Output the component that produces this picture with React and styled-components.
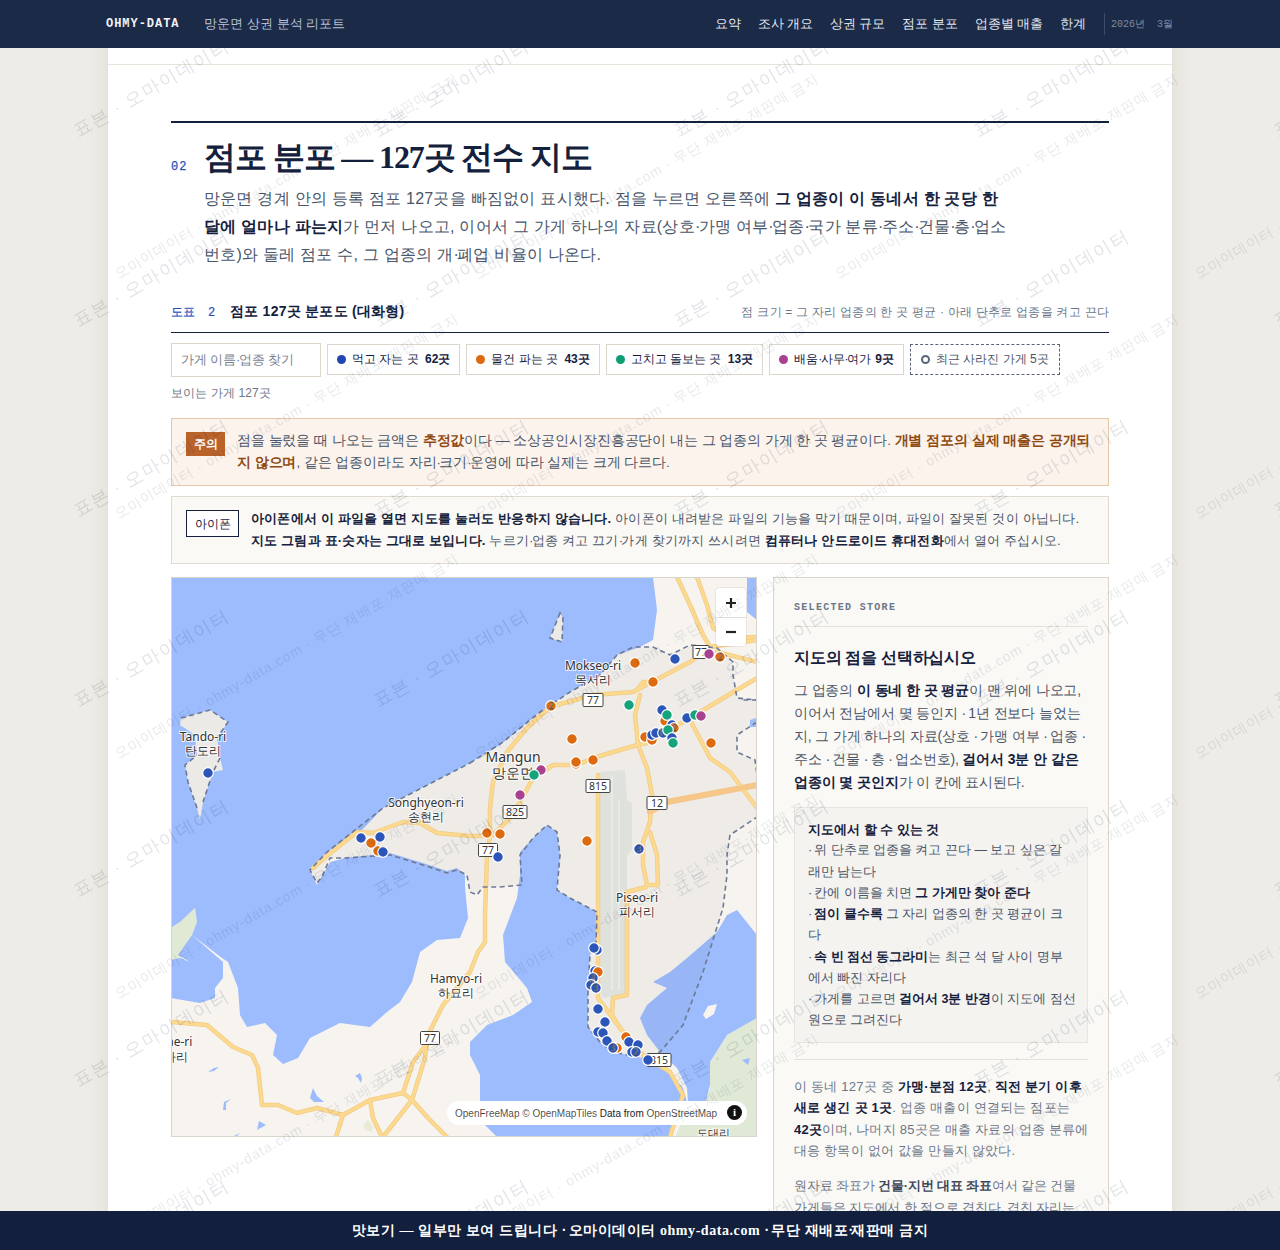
import React from "react";
import styled, { createGlobalStyle } from "styled-components";

const SANS = `"Liberation Sans", sans-serif`;
const SERIF = `"Liberation Serif", serif`;
const MONO = `"Liberation Mono", monospace`;
const NAVY = "#1b2a47";
const INK = "#14213d";
const BLUE = "#2a52be";

const Global = createGlobalStyle`
  html, body { margin: 0; padding: 0; height: 1250px; overflow: hidden; background: #eeece6; }
  body { font-family: ${SANS}; color: #4a5568; }
  * { box-sizing: border-box; }
`;

const Mid = styled.span`letter-spacing: -1.6px;`;
const M = () => <Mid>·</Mid>;

const TopBar = styled.header`
  position: fixed; top: 0; left: 0; right: 0; height: 48px; z-index: 100;
  background: ${NAVY}; display: flex; align-items: center; padding: 0 107px 0 106px;
`;
const Brand = styled.span`
  font: 700 12px ${MONO}; letter-spacing: .08em; color: #f1f3f7; margin-right: 25px;
`;
const TopTitle = styled.span`font-size: 13px; color: #b9c2d4;`;
const Nav = styled.nav`margin-left: auto; display: flex; gap: 16.8px; align-items: center; font-size: 12.8px; color: #e3e7ef;`;
const NavDate = styled.span`
  padding-left: 6px; margin-left: 1.2px; border-left: 1px solid #3c4b69; height: 22px; display: flex; align-items: center;
  font: 10px ${MONO}; color: #7f8aa3; white-space: pre;
`;
const BottomBar = styled.footer`
  position: fixed; left: 0; right: 0; bottom: 0; height: 39px; z-index: 100;
  background: #13203d; color: #fff; display: flex; align-items: center; justify-content: center;
  font: 700 14px ${SERIF}; letter-spacing: .04em;
`;

const Sheet = styled.main`
  width: 1066px; margin: 0 auto; background: #fff; padding-top: 48px; height: 1250px; overflow: hidden;
  box-shadow: 0 0 24px rgba(60,50,30,.07); border-left: 1px solid #e4e1d9; border-right: 1px solid #e4e1d9;
`;
const PrevEnd = styled.div`height: 17px; border-bottom: 1px solid #e8e4db;`;
const Section = styled.section`padding: 56px 63px 0 63px;`;
const SectionHead = styled.div`border-top: 2px solid ${INK}; padding-top: 13px; display: flex; align-items: flex-end;`;
const SectionNo = styled.span`font: 400 12px/14px ${MONO}; color: ${BLUE}; letter-spacing: .08em; width: 33px; margin-bottom: 4px; -webkit-text-stroke: .25px ${BLUE};`;
const Title = styled.h2`margin: 0; font: 700 32px/42px ${SERIF}; color: ${INK}; letter-spacing: -.035em;`;
const Lede = styled.p`
  margin: 7px 0 0 33px; max-width: 806px; font-size: 16px; line-height: 28px; color: #4a5568; letter-spacing: .015em;
  strong { color: ${INK}; font-weight: 700; }
`;
const FigHead = styled.div`
  margin-top: 34px; padding-bottom: 11px; border-bottom: 1px solid ${INK}; display: flex; align-items: center; letter-spacing: .015em;
`;
const FigNo = styled.span`font: 400 12px ${MONO}; color: ${BLUE}; width: 59px; word-spacing: 5px; -webkit-text-stroke: .2px ${BLUE};`;
const FigTitle = styled.span`font-size: 14px; font-weight: 700; color: ${INK};`;
const FigNote = styled.span`margin-left: auto; font-size: 12px; color: #6c7689;`;
const Controls = styled.div`margin-top: 10px; display: flex; gap: 6px; align-items: flex-start;`;
const Search = styled.div`
  width: 150px; height: 34px; border: 1px solid #dcd6cc; background: #fff; padding: 0 9px; display: flex; align-items: center;
  font-size: 13px; color: #7a8292; white-space: pre; letter-spacing: -.01em;
`;
const Chip = styled.div`
  height: 31px; margin-top: 1px; padding: 0 ${p => (p.$dashed ? 10 : 9)}px; display: flex; align-items: center; gap: 6px; font-size: 12px; background: #fff; white-space: pre;
  border: 1px ${p => (p.$dashed ? `dashed #5a6478` : `solid #dcd6cc`)};
  color: ${p => (p.$dashed ? "#4a5568" : INK)};
  b { font-weight: 700; margin-left: ${p => p.$bm ?? 3}px; }
`;
const ChipLabel = styled.span``;
const ChipDot = styled.i`
  width: 9px; height: 9px; border-radius: 50%;
  background: ${p => p.$c};
`;
const RingDot = styled.i`width: 9px; height: 9px; border-radius: 50%; border: 2px solid #5a6478;`;
const Count = styled.div`margin-top: 7px; font-size: 12px; line-height: 18px; color: #6c7689; letter-spacing: .01em;`;
const Note = styled.div`
  margin-top: ${p => p.$top}px; display: flex; gap: 12px; padding: 11px 14px 11px;
  background: ${p => (p.$warn ? "#fbf3ec" : "#faf9f5")};
  border: 1px solid ${p => (p.$warn ? "#e6c9aa" : "#e0dacf")};
  font-size: ${p => (p.$warn ? 13.5 : 13)}px; line-height: 22px; color: #4a5568; letter-spacing: ${p => (p.$warn ? "-.005em" : ".015em")};
`;
const WarnTag = styled.span`
  flex: none; height: 24px; width: 39px; margin-top: 2px; background: #b9622a; color: #fff; font-size: 12px; font-weight: 700; letter-spacing: 0;
  display: flex; align-items: center; justify-content: center;
`;
const PhoneTag = styled.span`
  flex: none; height: 27px; width: 53px; margin-top: 2px; background: #fff; color: ${INK}; border: 1px solid ${INK}; font-size: 12px; letter-spacing: 0;
  display: flex; align-items: center; justify-content: center;
`;
const NoteText = styled.div`
  strong { font-weight: 700; color: ${p => (p.$warn ? "#8f4a12" : INK)}; }
`;
const Columns = styled.div`margin-top: 13px; display: grid; grid-template-columns: 586px 336px; gap: 16px; align-items: start;`;
const MapBox = styled.div`position: relative; height: 560px; border: 1px solid #d9d5cc; overflow: hidden; background: #9cbcfd;`;
const MapSvg = styled.svg`display: block; width: 586px; height: 560px; margin: -1px;`;
const ZoomCtl = styled.div`
  position: absolute; top: 10px; right: 10px; width: 30px; height: 58px; background: #fff; border-radius: 4px;
  box-shadow: 0 0 0 1px rgba(0,0,0,.06); display: grid; grid-template-rows: 1fr 1fr;
  div + div { border-top: 1px solid #ddd; }
  div { display: flex; align-items: center; justify-content: center; }
`;
const Attrib = styled.div`
  position: absolute; right: 9px; bottom: 11px; height: 24px; width: 300px; border-radius: 12px; background: #fff;
  display: flex; align-items: center; padding-left: 8px; font: 10px "Liberation Sans", sans-serif; color: #222; white-space: nowrap;
  em { font-style: normal; color: rgba(0,0,0,.72); }
`;
const InfoBtn = styled.span`
  position: absolute; right: 5px; top: 4px; width: 15px; height: 15px; border-radius: 50%; background: #111; color: #fff;
  font: 700 11px/15px "Liberation Serif", serif; text-align: center;
`;
const Side = styled.aside`background: #faf9f5; border: 1px solid #ddd6ca; padding: 21px 20px 0; height: 700px;`;
const SideKicker = styled.div`
  font: 700 10px/18px ${MONO}; letter-spacing: .13em; color: #6c7689; padding-bottom: 9px; border-bottom: 1px solid #e6e2da;
`;
const SideHead = styled.h3`margin: 19px 0 0; font-size: 16px; line-height: 24px; font-weight: 700; color: ${INK}; letter-spacing: -.015em;`;
const SideBody = styled.p`
  margin: 9px 0 0; font-size: 14px; line-height: 23px; color: #4a5568; letter-spacing: -.01em;
  strong { font-weight: 700; color: ${INK}; }
`;
const SideFine = styled.p`
  margin: ${p => p.$top}px 0 0; font-size: ${p => p.$fs}px; line-height: ${p => p.$lh}px; color: #6b7588; letter-spacing: ${p => p.$ls}; white-space: nowrap;
  strong { font-weight: 700; color: ${p => p.$strong}; }
`;
const HowTo = styled.div`
  margin-top: 13px; background: #f4f3f0; border: 1px solid #e8e5df; padding: 11px 13px 10px; font-size: 12.5px; line-height: 21.25px; color: #4a5568; white-space: nowrap;
  strong { font-weight: 700; color: ${INK}; }
`;
const HowTitle = styled.div`font-size: 13px; font-weight: 700; color: ${INK};`;
const HowRow = styled.div``;
const SideRule = styled.div`margin-top: 16px; border-top: 1px solid #e6e2da;`;

const Watermark = styled.div`
  position: fixed; inset: 0; z-index: 50; pointer-events: none; overflow: hidden; display: grid;
`;
const WmGrid = styled.div`
  grid-area: 1 / 1; display: grid;
  grid-template-columns: repeat(6, ${p => p.$w}px); grid-auto-rows: ${p => p.$h}px;
  margin-left: ${p => p.$x}px; margin-top: ${p => p.$y}px; width: max-content; height: max-content;
`;
const WmCell = styled.div`display: flex; align-items: center; justify-content: center; overflow: visible;`;
const WmText = styled.span`
  transform: rotate(-30deg); white-space: nowrap; font-size: ${p => p.$fs}px; letter-spacing: ${p => p.$ls}px;
  color: rgba(27,42,71,${p => p.$a});
`;

const C = { b: "#2b55b8", o: "#dd6a0f", g: "#14a37a", p: "#a8428e" };
const DOTS = [
  ["b",208,773],["b",361,838],["b",380,837],["o",371,843],["o",378,851],["b",383,852],
  ["o",635,663],["o",653,682],["b",675,659],["o",720,657,"2"],["p",709,654],
  ["o",551,706,"2"],["g",629,705],
  ["b",662,710],["o",665,721],["g",667,715],["b",672,725],["o",674,728,"2"],
  ["b",687,718],["g",695,715],["p",701,716],
  ["o",645,737],["o",652,740],["b",652,735],["b",656,733],["b",663,733,"16"],["g",668,730],["b",672,738],["g",673,743],
  ["o",711,743],["o",572,739],["o",576,764],["o",576,762],["o",593,760],
  ["p",541,770],["g",534,775],["p",520,795],
  ["o",487,833],["o",500,834],["b",498,857],["o",587,841],["b",639,849,"3"],
  ["b",597,950],["b",594,948],["b",595,971],["o",598,972],["b",593,978,"4"],["b",591,985,"2"],["b",596,988,"3"],
  ["b",598,1009],["b",605,1022],["b",598,1032],["b",603,1033],["b",607,1041],
  ["o",617,1048],["b",613,1048,"3"],["o",626,1037],["b",629,1042],["b",638,1045],["b",632,1052],["b",636,1052,"2"],["b",648,1060],
];
const SHIELDS = [
  ["77",593,700,20],["825",515,812,24],["815",598,786,24],["12",657,803,20],["77",488,850,19],["77",430,1038,19],["815",659,1060,24],["77",701,652,16],
];
const LABELS = [
  ["Tando-ri",203,741,12],["탄도리",203,755,12],["Mokseo-ri",593,670,12],["목서리",593,684,12],
  ["Mangun",513,762,14],["망운면",513,778,14],["Songhyeon-ri",426,807,12],["송현리",426,821,12],
  ["Piseo-ri",637,902,12],["피서리",637,916,12],["Hamyo-ri",456,983,12],["하묘리",456,997,12],
  ["Dodae-ri",168,1046,12],["다리",176,1061,12],["도대리",713,1137,11],
];
const MAJOR = [
  "M313 868L322 860L328 855L357 832L373 833L403 822L420 823L437 833L470 836L490 836",
  "M490 836L490 808L493 782L507 752L527 728L550 707L593 695L633 692L690 662L710 647L757 640",
  "M490 836L487 855L485 915L485 942L478 952L470 972L443 1005L428 1035L425 1058L412 1100L383 1137",
  "M412 1100L403 1093L370 1100L343 1115L317 1108L297 1113L278 1105L262 1105L258 1068L252 1055L233 1047L207 1025L172 1022",
  "M343 1115L336 1137", "M370 1100L373 1118L382 1137", "M412 1100L428 1118L447 1137", "M403 1093L413 1062L428 1042",
  "M493 835L513 815L533 778L553 765L577 765L593 758L637 745L647 743L690 718L757 678",
  "M640 695L635 715L638 745L647 768L652 795L650 822L643 842L643 865L647 885L658 885L657 855L650 832",
  "M637 690L643 682L653 682",
  "M598 775L598 855L598 998L620 1028L643 1055L670 1072L683 1095L670 1137",
  "M627 892L627 995L613 998L612 1015L620 1028",
  "M627 892L646 887",
  "M677 577L690 605L703 635L710 647",
  "M697 577L707 605L713 628L730 638L757 637",
  "M717 652L757 662",
  "M690 720L710 758L730 772L757 808",
];
const BOUND = "M470 763L503 742L540 712L570 692L600 675L617 655L633 647L653 647L670 655L690 645L717 648L733 662L733 675L737 698L757 700L760 815L730 835L727 855L727 875L723 908L703 972L683 1025L660 1052L643 1058L613 1052L600 1042L588 1027L588 988L590 955L596 942L597 912L570 898L557 890L560 855L557 832L547 825L533 838L520 855L522 885L500 887L483 887L477 895L470 892L467 875L457 870L447 873L423 865L390 855L345 858L330 858L322 877L317 883L310 870L327 852L383 808Z";
const PONDS = [
  "M208 1072L214 1068L219 1067L214 1071Z","M223 1110L224 1102L231 1099L226 1103L226 1110Z","M257 1130L259 1121L266 1125Z",
  "M310 1098L313 1088L317 1096L324 1102L314 1102Z","M355 1076L360 1073L362 1078L361 1083L358 1078Z","M234 1136L240 1133L236 1137Z",
  "M750 720L756 718L756 727L750 727Z","M742 1060L750 1058L748 1065Z",
];

function MapArt() {
  return (
    <MapSvg viewBox="171 577 586 560" xmlns="http://www.w3.org/2000/svg">
      <rect x="171" y="577" width="586" height="560" fill="#f7f4f0" />
      <path fill="#e0e9d4" d="M172 927L180 922L195 908L197 922L192 935L180 958L172 965Z" />
      <path fill="#e0e9d6" d="M727 1035L757 1018L757 1137L675 1137L683 1118L710 1090L710 1062Z" />
      <path fill="#e8ecd5" d="M363 1126L368 1120L373 1126L372 1132L365 1130ZM337 1122L343 1119L343 1125L338 1126Z" />
      <path fill="#9cbcfd" d="M171 577L653 577L657 610L653 640L640 647L617 655L600 675L570 692L540 712L500 745L470 763L383 808L360 832L327 852L310 870L317 885L330 862L345 858L390 853L423 863L447 871L457 868L465 875L465 888L468 918L460 938L437 940L420 952L412 982L400 1002L387 1012L370 1027L340 1023L310 1038L298 1058L283 1064L273 1055L277 1035L265 1023L247 1027L240 1015L238 988L228 962L222 958L192 935L197 922L195 908L180 922L172 927L171 927Z" />
      <path fill="#9cbcfd" d="M192 935L223 962L223 978L215 988L215 998L200 1003L171 998L171 960L180 958L190 962L178 955Z" />
      <path fill="#9cbcfd" d="M520 852L533 838L547 825L557 832L560 855L557 890L570 898L597 912L596 942L590 955L588 988L588 1027L600 1042L613 1052L643 1058L670 1072L683 1088L687 1102L677 1115L670 1137L497 1137L480 1120L480 1075L470 1055L470 1042L487 1025L513 1015L532 1002L527 988L505 962L503 935L517 898L520 875Z" />
      <path fill="#9cbcfd" d="M737 910L727 915L717 932L687 958L670 972L653 982L667 988L647 1005L640 1018L647 1035L660 1052L677 1068L687 1088L688 1102L683 1118L703 1112L710 1085L710 1062L727 1035L757 1018L757 935Z" />
      <path fill="#f7f4f0" d="M703 1015L708 1006L717 1004L714 1014L706 1019Z" />
      <path fill="#9cbcfd" d="M747 577L757 577L757 620L747 612Z" />
      <path fill="rgba(60,60,70,.045)" d={BOUND} />
      <path fill="#f7f4f0" d="M757 722L737 735L737 752L755 760L757 770Z" />
      <path fill="#eceae7" d="M181 718L210 710L228 722L217 738L220 758L223 770L213 772L203 802L200 820L197 808L188 782L185 765L197 755L195 735L180 725Z" />
      <path fill="#eceae7" d="M560 613L550 638L562 642L563 618Z" />
      {PONDS.map((d, i) => <path key={i} d={d} fill="#9cbcfd" />)}
      <path fill="#dfe1dc" d="M600 772L625 770L627 800L632 803L632 850L627 855L627 995L603 998L600 990Z" />
      <path fill="none" stroke="#e9eae6" strokeWidth="2" d="M612 775V990M619 800V990" />
      <path fill="none" stroke="#e9eae6" strokeWidth="1" d="M628 860H640M628 870H640M628 880H640M635 855V890" />
      <g fill="none" strokeLinecap="round" strokeLinejoin="round">
        {MAJOR.map((d, i) => <path key={i} d={d} stroke="#f3cb85" strokeWidth="4.5" />)}
        <path d="M650 812L667 802L757 785" stroke="#f3c382" strokeWidth="6" />
        {MAJOR.map((d, i) => <path key={i} d={d} stroke="#fbd98f" strokeWidth="3" />)}
        <path d="M650 812L667 802L757 785" stroke="#f6c788" strokeWidth="4.5" />
      </g>
      <g fill="none" stroke="#6d7a96" strokeWidth="1.6" strokeDasharray="5 3.5">
        <path d={BOUND} />
        <path d="M181 718L210 710L228 722L217 738M220 758L213 772L203 802M197 808L188 782L185 765L197 755" />
        <path d="M560 613L550 638L562 642L563 618Z" />
        <path d="M757 700L740 700M757 722L737 735L737 752L755 760L757 775" />
      </g>
      {SHIELDS.map(([t, x, y, w], i) => (
        <g key={i}>
          <rect x={x - w / 2} y={y - 6.5} width={w} height={13} rx="1" fill="#fff" stroke="#444" strokeWidth="1" />
          <text x={x} y={y + 4} textAnchor="middle" fontSize="10.5" fill="#333" fontFamily='"Noto Sans", sans-serif'>{t}</text>
        </g>
      ))}
      {LABELS.map(([t, x, y, fs], i) => (
        <text key={i} x={x} y={y} textAnchor="middle" fontSize={fs} fill="#333" stroke="#fff" strokeWidth="2" paintOrder="stroke" strokeOpacity=".8"
          fontFamily='"Noto Sans", sans-serif'>{t}</text>
      ))}
      {DOTS.map(([k, x, y, n], i) => (
        <g key={i}>
          <circle cx={x} cy={y} r="5.3" fill={C[k]} stroke="#fff" strokeWidth="1.2" />
          {n && <text x={x} y={y + 3} textAnchor="middle" fontSize="8" fill="#fff" stroke="#333" strokeWidth=".4" fontFamily='"Noto Sans", sans-serif'>{n}</text>}
        </g>
      ))}
    </MapSvg>
  );
}

const range = n => Array.from({ length: n }, (_, i) => i);

export default function App() {
  return (
    <>
      <Global />
      <TopBar>
        <Brand>OHMY-DATA</Brand>
        <TopTitle>망운면 상권 분석 리포트</TopTitle>
        <Nav>
          <span>요약</span><span>조사 개요</span><span>상권 규모</span><span>점포 분포</span><span>업종별 매출</span><span>한계</span>
          <NavDate>2026년  3월</NavDate>
        </Nav>
      </TopBar>
      <Sheet>
        <PrevEnd />
        <Section>
          <SectionHead>
            <SectionNo>02</SectionNo>
            <Title>점포 분포 — 127곳 전수 지도</Title>
          </SectionHead>
          <Lede>
            망운면 경계 안의 등록 점포 127곳을 빠짐없이 표시했다. 점을 누르면 오른쪽에 <strong>그 업종이 이 동네서 한 곳당 한 달에 얼마나 파는지</strong>가 먼저 나오고, 이어서 그 가게 하나의 자료(상호<M />가맹 여부<M />업종<M />국가 분류<M />주소<M />건물<M />층<M />업소번호)와 둘레 점포 수, 그 업종의 개<M />폐업 비율이 나온다.
          </Lede>
          <FigHead>
            <FigNo>도표 2</FigNo>
            <FigTitle>점포 127곳 분포도 (대화형)</FigTitle>
            <FigNote>점 크기 = 그 자리 업종의 한 곳 평균 · 아래 단추로 업종을 켜고 끈다</FigNote>
          </FigHead>
          <Controls>
            <Search><span>가게 이름<M />업종 찾기</span></Search>
            <Chip><ChipDot $c="#2146b4" /><ChipLabel>먹고 자는 곳 <b>62곳</b></ChipLabel></Chip>
            <Chip><ChipDot $c="#dd6a0f" /><ChipLabel>물건 파는 곳 <b>43곳</b></ChipLabel></Chip>
            <Chip><ChipDot $c="#0f9d74" /><ChipLabel>고치고 돌보는 곳 <b>13곳</b></ChipLabel></Chip>
            <Chip $bm={1}><ChipDot $c="#a8428e" /><ChipLabel>배움<M />사무<M />여가 <b>9곳</b></ChipLabel></Chip>
            <Chip $dashed><RingDot /><ChipLabel>최근 사라진 가게 5곳</ChipLabel></Chip>
          </Controls>
          <Count>보이는 가게 127곳</Count>
          <Note $warn $top={16}>
            <WarnTag>주의</WarnTag>
            <NoteText $warn>점을 눌렀을 때 나오는 금액은 <strong>추정값</strong>이다 — 소상공인시장진흥공단이 내는 그 업종의 가게 한 곳 평균이다. <strong>개별 점포의 실제 매출은 공개되지 않으며</strong>, 같은 업종이라도 자리<M />크기<M />운영에 따라 실제는 크게 다르다.</NoteText>
          </Note>
          <Note $top={10}>
            <PhoneTag>아이폰</PhoneTag>
            <NoteText><strong>아이폰에서 이 파일을 열면 지도를 눌러도 반응하지 않습니다.</strong> 아이폰이 내려받은 파일의 기능을 막기 때문이며, 파일이 잘못된 것이 아닙니다.<br /><strong>지도 그림과 표·숫자는 그대로 보입니다.</strong> 누르기<M />업종 켜고 끄기<M />가게 찾기까지 쓰시려면 <strong>컴퓨터나 안드로이드 휴대전화</strong>에서 열어 주십시오.</NoteText>
          </Note>
          <Columns>
            <MapBox>
              <MapArt />
              <ZoomCtl>
                <div><svg width="12" height="12" viewBox="0 0 12 12"><path d="M6 1v10M1 6h10" stroke="#222" strokeWidth="2.2" /></svg></div>
                <div><svg width="12" height="12" viewBox="0 0 12 12"><path d="M1 6h10" stroke="#222" strokeWidth="2.2" /></svg></div>
              </ZoomCtl>
              <Attrib><em>OpenFreeMap © OpenMapTiles</em>&nbsp;Data from&nbsp;<em>OpenStreetMap</em><InfoBtn>i</InfoBtn></Attrib>
            </MapBox>
            <Side>
              <SideKicker>SELECTED STORE</SideKicker>
              <SideHead>지도의 점을 선택하십시오</SideHead>
              <SideBody>그 업종의 <strong>이 동네 한 곳 평균</strong>이 맨 위에 나오고, 이어서 전남에서 몇 등인지 <M /> 1년 전보다 늘었는지, 그 가게 하나의 자료(상호 <M /> 가맹 여부 <M /> 업종 <M /> 주소 <M /> 건물 <M /> 층 <M /> 업소번호), <strong>걸어서 3분 안 같은 업종이 몇 곳인지</strong>가 이 칸에 표시된다.</SideBody>
              <HowTo>
                <HowTitle>지도에서 할 수 있는 것</HowTitle>
                <HowRow><M /> 위 단추로 업종을 켜고 끈다 — 보고 싶은 갈<br />래만 남는다</HowRow>
                <HowRow><M /> 칸에 이름을 치면 <strong>그 가게만 찾아 준다</strong></HowRow>
                <HowRow><M /> <strong>점이 클수록</strong> 그 자리 업종의 한 곳 평균이 크<br />다</HowRow>
                <HowRow><M /> <strong>속 빈 점선 동그라미</strong>는 최근 석 달 사이 명부<br />에서 빠진 자리다</HowRow>
                <HowRow><M /> 가게를 고르면 <strong>걸어서 3분 반경</strong>이 지도에 점선<br />원으로 그려진다</HowRow>
              </HowTo>
              <SideRule />
              <SideFine $top={16} $fs={13} $lh={21.6} $ls=".017em" $strong={INK}>이 동네 127곳 중 <strong>가맹·분점 12곳</strong>, <strong>직전 분기 이후</strong><br /><strong>새로 생긴 곳 1곳</strong>. 업종 매출이 연결되는 점포는<br /><strong>42곳</strong>이며, 나머지 85곳은 매출 자료의 업종 분류에<br />대응 항목이 없어 값을 만들지 않았다.</SideFine>
              <SideFine $top={13} $fs={12.5} $lh={22} $ls="-.01em" $strong="#3c4659">원자료 좌표가 <strong>건물·지번 대표 좌표</strong>여서 같은 건물<br />가게들은 지도에서 한 점으로 겹친다. 겹친 자리는<br />숫자로 묶인다.</SideFine>
            </Side>
          </Columns>
        </Section>
      </Sheet>
      <Watermark aria-hidden>
        <WmGrid $w={300} $h={190} $x={1} $y={-7}>
          {range(42).map(i => <WmCell key={i}><WmText $fs={18} $ls={1.5} $a={0.13}>표본 · 오마이데이터</WmText></WmCell>)}
        </WmGrid>
        <WmGrid $w={360} $h={240} $x={107} $y={-183}>
          {range(36).map(i => <WmCell key={i}><WmText $fs={14} $ls={1} $a={0.11}>오마이데이터 · ohmy-data.com · 무단 재배포·재판매 금지</WmText></WmCell>)}
        </WmGrid>
      </Watermark>
      <BottomBar><span>맛보기 — 일부만 보여 드립니다 <M /> 오마이데이터 ohmy-data.com <M /> 무단 재배포<M />재판매 금지</span></BottomBar>
    </>
  );
}
